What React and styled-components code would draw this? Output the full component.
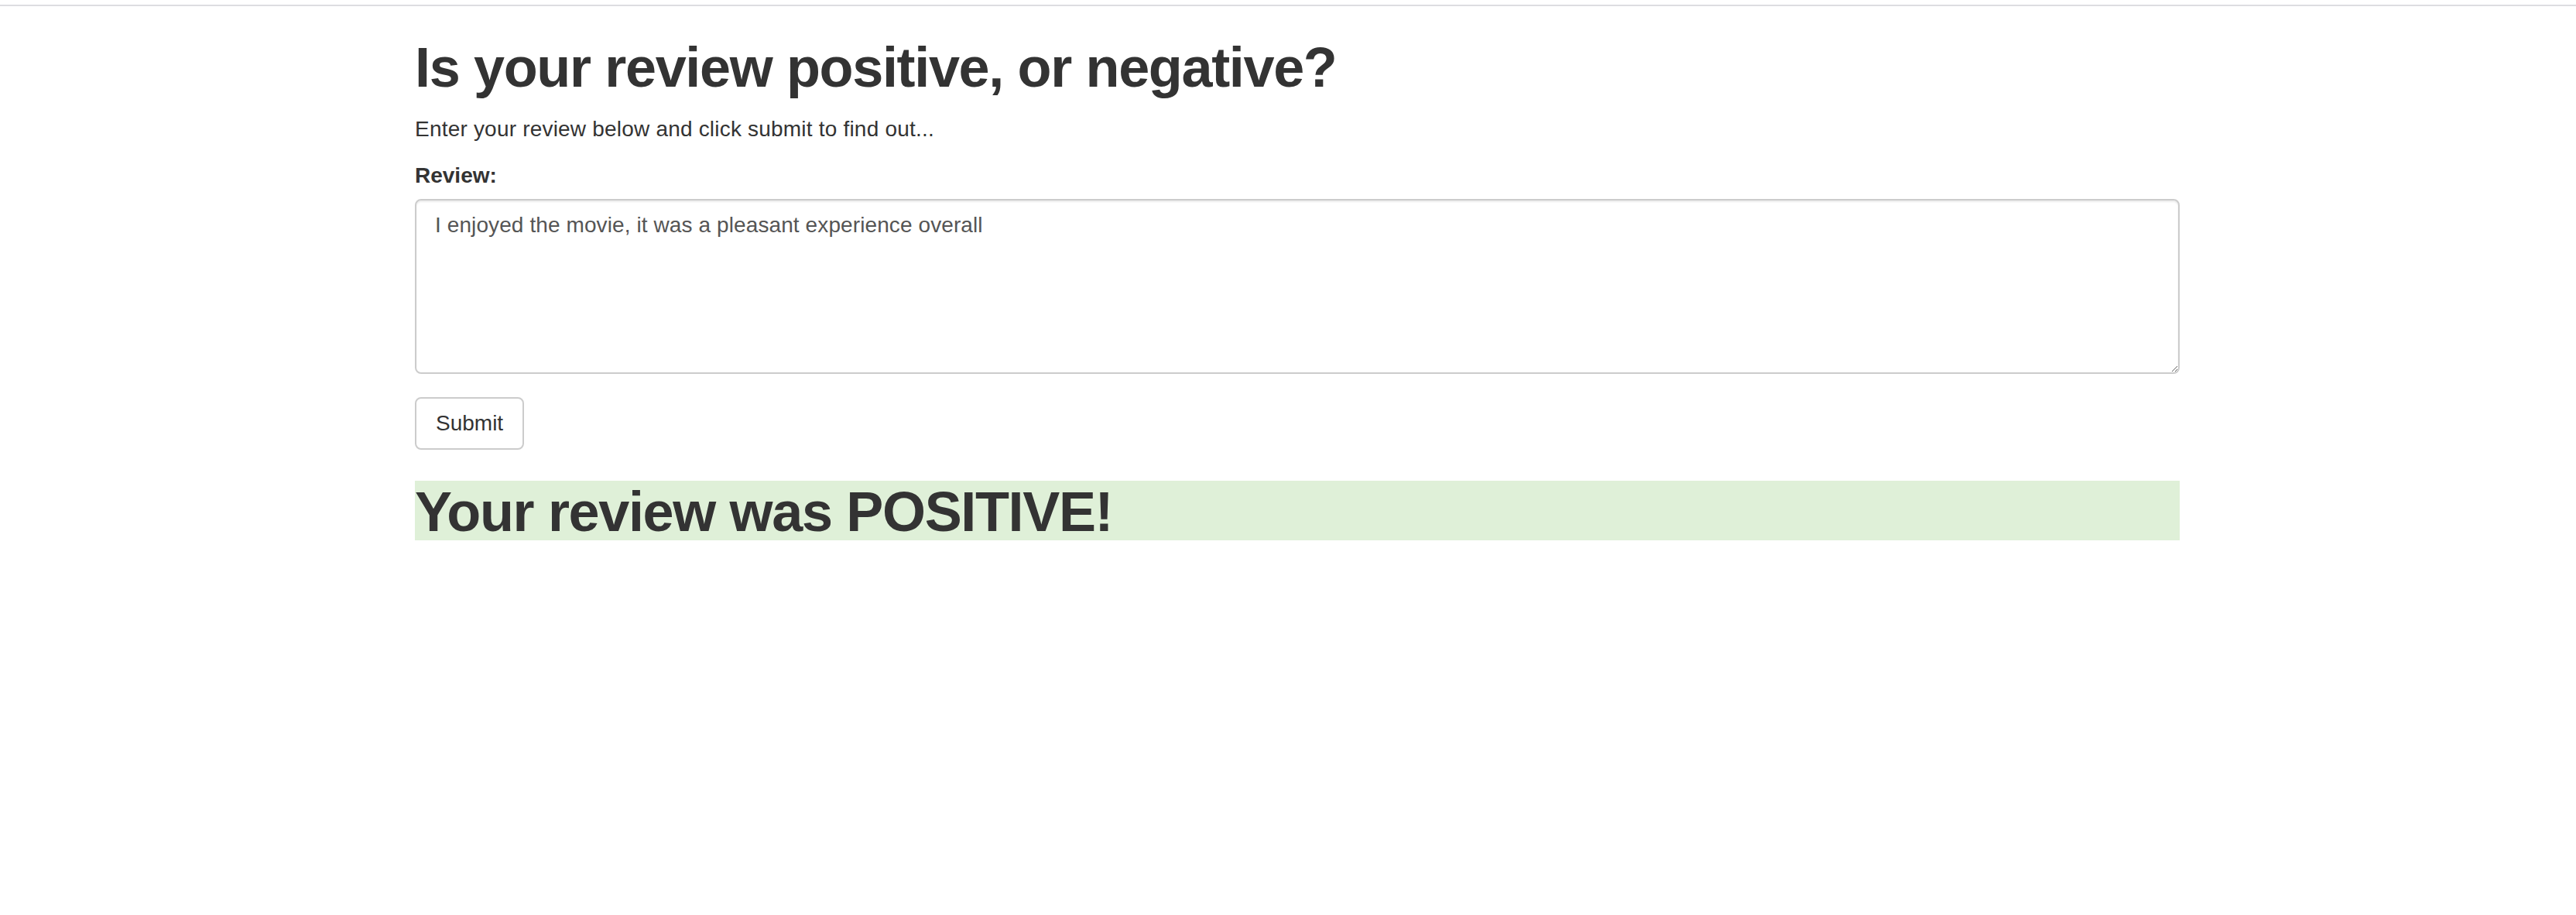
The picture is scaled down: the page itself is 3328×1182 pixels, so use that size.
import React, { useState } from 'react';
import styled, { createGlobalStyle } from 'styled-components';

const GlobalStyle = createGlobalStyle`
  html, body {
    margin: 0;
    padding: 0;
    background: #fff;
  }
  body {
    font-family: "Liberation Sans", Arial, Helvetica, sans-serif;
    font-size: 28px;
    line-height: 40px;
    color: #333;
  }
  * {
    box-sizing: border-box;
  }
`;

const TopRule = styled.div`
  margin-top: 6px;
  height: 2px;
  width: 100%;
  background: #dddde1;
`;

const Container = styled.div`
  width: 2280px;
  margin-left: 536px;
`;

const Title = styled.h1`
  margin: 40px 0 20px;
  font-size: 72px;
  line-height: 79px;
  font-weight: 700;
  letter-spacing: -1.35px;
  color: #333;
`;

const Lead = styled.p`
  margin: 0 0 20px;
  font-size: 28px;
  line-height: 40px;
  letter-spacing: 0.2px;
`;

const FormGroup = styled.div`
  margin-bottom: 30px;
`;

const Label = styled.label`
  display: inline-block;
  margin-bottom: 10px;
  font-weight: 700;
  font-size: 28px;
  line-height: 40px;
`;

const TextArea = styled.textarea`
  display: block;
  width: 100%;
  height: 226px;
  padding: 12px 24px;
  font-family: "Liberation Sans", Arial, Helvetica, sans-serif;
  font-size: 28px;
  line-height: 40px;
  letter-spacing: 0.1px;
  color: #555;
  background: #fff;
  border: 2px solid #ccc;
  border-radius: 8px;
  box-shadow: inset 0 2px 2px rgba(0, 0, 0, 0.075);
  outline: none;
  resize: vertical;
`;

const Button = styled.button`
  display: inline-block;
  padding: 12px 25px;
  font-family: "Liberation Sans", Arial, Helvetica, sans-serif;
  font-size: 28px;
  line-height: 40px;
  color: #333;
  background: #fff;
  border: 2px solid #ccc;
  border-radius: 8px;
  cursor: pointer;
`;

const Result = styled.h1`
  margin: 40px 0 0;
  padding-top: 3px;
  font-size: 72px;
  line-height: 74px;
  font-weight: 700;
  letter-spacing: -1.35px;
  color: #333;
  background: ${p => (p.positive ? '#dff0d8' : '#f2dede')};
`;

export default function App() {
  const [review, setReview] = useState('I enjoyed the movie, it was a pleasant experience overall');

  return (
    <>
      <GlobalStyle />
      <TopRule />
      <Container>
        <Title>Is your review positive, or negative?</Title>
        <Lead>Enter your review below and click submit to find out...</Lead>
        <form onSubmit={e => e.preventDefault()}>
          <FormGroup>
            <Label htmlFor="review">Review:</Label>
            <TextArea id="review" value={review} onChange={e => setReview(e.target.value)} />
          </FormGroup>
          <Button type="submit">Submit</Button>
        </form>
        <Result positive>Your review was POSITIVE!</Result>
      </Container>
    </>
  );
}
